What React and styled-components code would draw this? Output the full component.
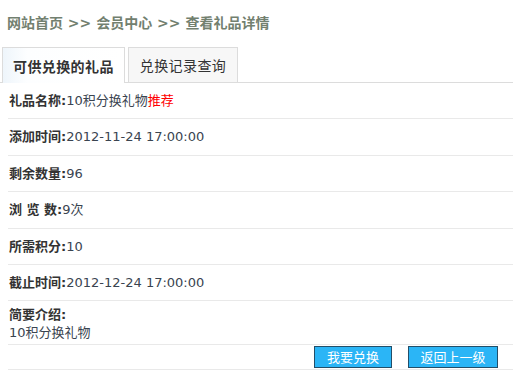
import React from "react";
import styled, { createGlobalStyle } from "styled-components";

const Global = createGlobalStyle`
  html, body { margin: 0; padding: 0; background: #fff; }
  body { font-family: "DejaVu Sans", "Noto Sans CJK SC", sans-serif; font-size: 13px; color: #333; }
`;

const Page = styled.div`
  width: 513px;
`;

const Breadcrumb = styled.div`
  height: 47px;
  box-sizing: border-box;
  padding: 13px 0 0 7px;
  font-size: 14px;
  font-weight: bold;
  line-height: 20px;
  color: #72806f;
`;

const Tabs = styled.div`
  display: flex;
  gap: 3px;
  padding-left: 2px;
  border-bottom: 1px solid #dcdcdc;
  height: 36px;
  box-sizing: border-box;
`;

const Tab = styled.div`
  box-sizing: border-box;
  height: ${(p) => (p.$active ? "36px" : "35px")};
  padding: 0 ${(p) => (p.$active ? "10px" : "11px")};
  border: 1px solid #dcdcdc;
  border-bottom: none;
  background: ${(p) => (p.$active ? "linear-gradient(90deg,#eef5fb,#fdfeff 20%,#fff)" : "#f7f7f7")};
  font-family: "Noto Sans CJK SC", sans-serif;
  font-size: 14px;
  font-weight: ${(p) => (p.$active ? "bold" : "normal")};
  color: #333;
  display: flex;
  align-items: center;
  letter-spacing: 0.4px;
`;

const List = styled.div`
  margin-left: 8px;
`;

const Row = styled.div`
  height: ${(p) => p.$h || 36}px;
  box-sizing: border-box;
  border-bottom: 1px solid #e9e9e9;
  display: flex;
  align-items: center;
  padding-left: 1px;
  line-height: 18px;
`;

const IntroRow = styled.div`
  height: 44px;
  box-sizing: border-box;
  border-bottom: 1px solid #e9e9e9;
  padding: 5px 0 0 1px;
  line-height: 18px;
`;

const Label = styled.span`
  font-weight: bold;
  color: #333;
  white-space: pre;
`;

const Value = styled.span`
  color: #3a4450;
`;

const Red = styled.span`
  color: #f00;
`;

const ButtonRow = styled.div`
  height: 25px;
  box-sizing: border-box;
  border-bottom: 1px solid #e9e9e9;
  display: flex;
  justify-content: flex-end;
  align-items: flex-start;
  padding: 1px 15px 0 0;
  gap: 16px;
`;

const Button = styled.button`
  width: ${(p) => p.$w}px;
  height: 22px;
  box-sizing: border-box;
  padding: 0;
  background: #2bb5f6;
  border: 1px solid #234e68;
  color: #fff;
  font-family: "Noto Sans CJK SC", sans-serif;
  font-size: 13px;
  line-height: 18px;
  cursor: pointer;
`;

export default function App() {
  return (
    <Page>
      <Global />
      <Breadcrumb>网站首页 &gt;&gt; 会员中心 &gt;&gt; 查看礼品详情</Breadcrumb>
      <Tabs>
        <Tab $active>可供兑换的礼品</Tab>
        <Tab>兑换记录查询</Tab>
      </Tabs>
      <List>
        <Row $h={36}>
          <Label>礼品名称:</Label>
          <Value>10积分换礼物<Red>推荐</Red></Value>
        </Row>
        <Row $h={37}>
          <Label>添加时间:</Label>
          <Value>2012-11-24 17:00:00</Value>
        </Row>
        <Row $h={36}>
          <Label>剩余数量:</Label>
          <Value>96</Value>
        </Row>
        <Row $h={37}>
          <Label>浏 览 数:</Label>
          <Value>9次</Value>
        </Row>
        <Row $h={36}>
          <Label>所需积分:</Label>
          <Value>10</Value>
        </Row>
        <Row $h={36}>
          <Label>截止时间:</Label>
          <Value>2012-12-24 17:00:00</Value>
        </Row>
        <IntroRow>
          <div><Label>简要介绍:</Label></div>
          <div><Value>10积分换礼物</Value></div>
        </IntroRow>
        <ButtonRow>
          <Button $w={78}>我要兑换</Button>
          <Button $w={90}>返回上一级</Button>
        </ButtonRow>
      </List>
    </Page>
  );
}
